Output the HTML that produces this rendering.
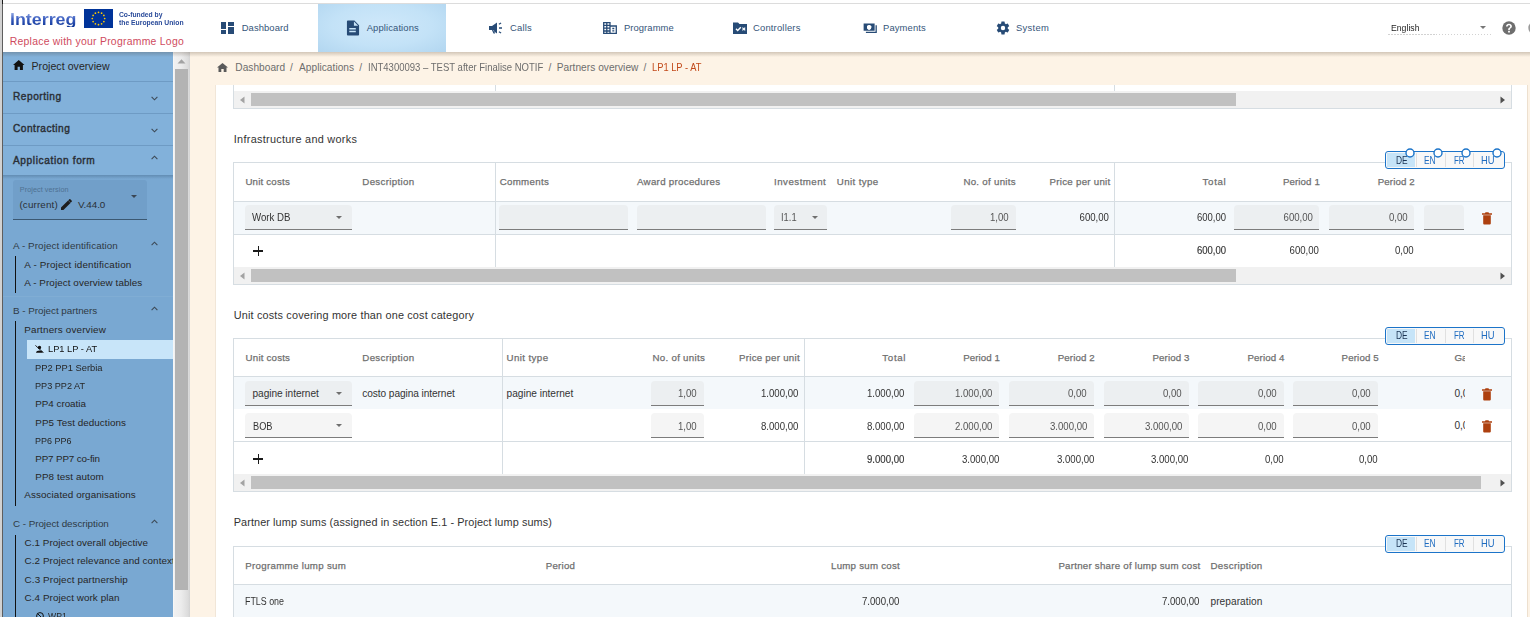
<!DOCTYPE html><html><head><meta charset="utf-8"><style>
*{margin:0;padding:0;box-sizing:border-box}
html,body{width:1530px;height:617px;overflow:hidden;background:#fff;font-family:'Liberation Sans', sans-serif;position:relative}
.t{position:absolute;white-space:nowrap}
svg{display:block}
</style></head><body>
<div style="position:absolute;left:0px;top:0px;width:1530px;height:617px;background:#fff;"></div>
<div style="position:absolute;left:173px;top:52px;width:1357px;height:565px;background:#fdf3e6;"></div>
<div style="position:absolute;left:215px;top:85px;width:1313px;height:532px;background:#fff;border-left:1px solid #f1e6d8;border-right:1px solid #ede0cf;"></div>
<div style="position:absolute;left:0px;top:3px;width:1530px;height:1px;background:#dcdcdc;"></div>
<div style="position:absolute;left:3px;top:4px;width:1527px;height:48px;background:#fff;"></div>
<div style="position:absolute;left:318px;top:4px;width:128px;height:48px;background:radial-gradient(ellipse at 50% 45%, #cfe8fa 0%, #c3e2f7 55%, #b2d6f0 100%);"></div>
<div id="t0" class="t" style="left:9.5px;top:11.50px;font-size:15.65px;line-height:15.65px;font-weight:700;color:#1b3f9e;transform:scaleX(1.1407);transform-origin:left center;background:linear-gradient(#9fb4ea 0%,#3d5fc0 45%,#0b3496 100%);-webkit-background-clip:text;background-clip:text;color:transparent;">Interreg</div>
<div style="position:absolute;left:84px;top:9px;width:29px;height:19px;background:#003399;"></div>
<svg style="position:absolute;left:84px;top:9px;" width="29" height="19" viewBox="0 0 29 19"><circle cx="20.70" cy="9.50" r="0.85" fill="#ffcc00"/><circle cx="19.87" cy="12.60" r="0.85" fill="#ffcc00"/><circle cx="17.60" cy="14.87" r="0.85" fill="#ffcc00"/><circle cx="14.50" cy="15.70" r="0.85" fill="#ffcc00"/><circle cx="11.40" cy="14.87" r="0.85" fill="#ffcc00"/><circle cx="9.13" cy="12.60" r="0.85" fill="#ffcc00"/><circle cx="8.30" cy="9.50" r="0.85" fill="#ffcc00"/><circle cx="9.13" cy="6.40" r="0.85" fill="#ffcc00"/><circle cx="11.40" cy="4.13" r="0.85" fill="#ffcc00"/><circle cx="14.50" cy="3.30" r="0.85" fill="#ffcc00"/><circle cx="17.60" cy="4.13" r="0.85" fill="#ffcc00"/><circle cx="19.87" cy="6.40" r="0.85" fill="#ffcc00"/></svg>
<div id="t1" class="t" style="left:118.6px;top:11.24px;font-size:7.25px;line-height:7.25px;font-weight:700;color:#2a4b9a;transform:scaleX(0.9298);transform-origin:left center;">Co-funded by</div>
<div id="t2" class="t" style="left:118.6px;top:19.24px;font-size:7.25px;line-height:7.25px;font-weight:700;color:#2a4b9a;transform:scaleX(0.9371);transform-origin:left center;">the European Union</div>
<div id="t3" class="t" style="left:9.7px;top:37.33px;font-size:10.43px;line-height:10.43px;font-weight:400;color:#cf4b5e;letter-spacing:0.251px;">Replace with your Programme Logo</div>
<svg style="position:absolute;left:221px;top:22px;" width="13" height="12" viewBox="0 0 13 12"><rect x="0" y="0" width="5" height="7" fill="#274b76"/><rect x="0" y="8" width="5" height="4" fill="#274b76"/><rect x="7" y="0" width="6" height="4" fill="#274b76"/><rect x="7" y="5" width="6" height="7" fill="#274b76"/></svg>
<svg style="position:absolute;left:346px;top:20px;" width="14" height="16" viewBox="0 0 15 16"><path fill="#274b76" d="M2 0h7l5 5v10a1 1 0 0 1-1 1H2a1 1 0 0 1-1-1V1a1 1 0 0 1 1-1zM8.5 1v4.5H13zM3.5 8v1.6h7V8zM3.5 11v1.6h7V11z" fill-rule="evenodd"/></svg>
<svg style="position:absolute;left:489px;top:22px;" width="15" height="12" viewBox="0 0 15 12"><path fill="#274b76" d="M0 4h3l5-3.5v11L3 8v0H0zM3 8.2l1.5 3.3h1.6L5 8.5zM10 5.3h3v1.4h-3zM9.6 1.8l2.2-1.3.6 1-2.2 1.3zM9.6 10.2l.6-1 2.2 1.3-.6 1z"/></svg>
<svg style="position:absolute;left:603px;top:22px;" width="14" height="12" viewBox="0 0 14 12"><path fill="none" stroke="#274b76" stroke-width="1.3" d="M.7.7h6.3v10.6H.7zM7 4h6.3v7.3H7zM.7 3.4h6.3M.7 6.2h6.3M.7 9h6.3M3.8.7v10.6M9.3 6.5h2M9.3 8.8h2"/></svg>
<svg style="position:absolute;left:733px;top:21px;" width="14" height="13" viewBox="0 0 14 13"><path fill="#274b76" d="M0 1.5h5l1.5 1.5H14v10H0zM2.5 8.2l1-1 1.2 1.2 2.6-2.6 1 1-3.6 3.6zM9 7l.8-.8 1 1 1-1 .8.8-1 1 1 1-.8.8-1-1-1 1L9 9l1-1z" fill-rule="evenodd"/></svg>
<svg style="position:absolute;left:862.5px;top:22.5px;" width="15" height="11" viewBox="0 0 15 12"><path fill="#274b76" d="M0 .5h12v8H0zM6 2.3l2.3 1v1.6C8.3 6.2 7.3 7 6 7.4 4.7 7 3.7 6.2 3.7 4.9V3.3z M13 2.5h1.4v8.5H2.5V9.6H13z" fill-rule="evenodd"/><path fill="#fff" d="M6 2.3l2.3 1v1.6C8.3 6.2 7.3 7 6 7.4 4.7 7 3.7 6.2 3.7 4.9V3.3z"/></svg>
<svg style="position:absolute;left:995px;top:20px;" width="16" height="16" viewBox="0 0 24 24"><path fill="#274b76" d="M19.14 12.94c.04-.3.06-.61.06-.94 0-.32-.02-.64-.07-.94l2.03-1.58a.49.49 0 0 0 .12-.61l-1.92-3.32a.49.49 0 0 0-.59-.22l-2.39.96c-.5-.38-1.03-.7-1.62-.94l-.36-2.54a.48.48 0 0 0-.48-.41h-3.84c-.24 0-.43.17-.47.41l-.36 2.54c-.59.24-1.13.57-1.62.94l-2.39-.96a.49.49 0 0 0-.59.22L2.74 8.87c-.12.21-.08.47.12.61l2.03 1.58c-.05.3-.09.63-.09.94s.02.64.07.94l-2.03 1.58a.49.49 0 0 0-.12.61l1.92 3.32c.12.22.37.29.59.22l2.39-.96c.5.38 1.03.7 1.62.94l.36 2.54c.05.24.24.41.48.41h3.84c.24 0 .44-.17.47-.41l.36-2.54c.59-.24 1.13-.56 1.62-.94l2.39.96c.22.08.47 0 .59-.22l1.92-3.32c.12-.22.07-.47-.12-.61zM12 15.3a3.3 3.3 0 1 1 0-6.6 3.3 3.3 0 0 1 0 6.6z"/></svg>
<div id="t4" class="t" style="left:241.7px;top:22.69px;font-size:9.42px;line-height:9.42px;font-weight:400;color:#35557a;letter-spacing:0.090px;">Dashboard</div>
<div id="t5" class="t" style="left:366.7px;top:22.69px;font-size:9.42px;line-height:9.42px;font-weight:400;color:#35557a;letter-spacing:0.120px;">Applications</div>
<div id="t6" class="t" style="left:510px;top:22.69px;font-size:9.42px;line-height:9.42px;font-weight:400;color:#35557a;letter-spacing:0.208px;">Calls</div>
<div id="t7" class="t" style="left:623.9px;top:22.69px;font-size:9.42px;line-height:9.42px;font-weight:400;color:#35557a;letter-spacing:0.089px;">Programme</div>
<div id="t8" class="t" style="left:753px;top:22.69px;font-size:9.42px;line-height:9.42px;font-weight:400;color:#35557a;letter-spacing:0.187px;">Controllers</div>
<div id="t9" class="t" style="left:883px;top:22.69px;font-size:9.42px;line-height:9.42px;font-weight:400;color:#35557a;letter-spacing:0.132px;">Payments</div>
<div id="t10" class="t" style="left:1016px;top:22.69px;font-size:9.42px;line-height:9.42px;font-weight:400;color:#35557a;letter-spacing:0.276px;">System</div>
<div id="t11" class="t" style="left:1390.6px;top:22.82px;font-size:9.86px;line-height:9.86px;font-weight:400;color:#1e1e1e;transform:scaleX(0.8823);transform-origin:left center;">English</div>
<div style="position:absolute;left:1388px;top:34px;width:103px;height:1px;background:repeating-linear-gradient(90deg,#d2d2d2 0 1.5px,transparent 1.5px 3px);"></div>
<svg style="position:absolute;left:1480px;top:26px;" width="6" height="3" viewBox="0 0 6 3"><path d="M0 0h6L3 3z" fill="#777"/></svg>
<svg style="position:absolute;left:1502px;top:21px;" width="14" height="14" viewBox="0 0 14 14"><circle cx="7" cy="7" r="6.7" fill="#6e6e6e"/><path fill="#fff" d="M6.2 9.2h1.6v-.5c0-.7.4-1 .9-1.4.6-.5 1.2-1 1.2-2.1C9.9 3.7 8.6 2.8 7 2.8S4.1 3.8 4 5.4h1.7c.1-.7.6-1.1 1.3-1.1.7 0 1.2.4 1.2 1.1 0 .5-.3.8-.8 1.2-.7.5-1.2 1-1.2 2zM6.1 10h1.8v1.6H6.1z"/></svg>
<svg style="position:absolute;left:1528px;top:21px;" width="14" height="14" viewBox="0 0 14 14"><circle cx="7" cy="7" r="6.7" fill="#9a9a9a"/></svg>
<svg style="position:absolute;left:217px;top:62.8px;" width="11" height="9" viewBox="0 0 11 9"><path fill="#5a5a5a" d="M5.5 0L0 4.6h1.5V9h2.8V6.1h2.4V9h2.8V4.6H11z"/></svg>
<div id="t12" class="t" style="left:235.3px;top:63.18px;font-size:10.14px;line-height:10.14px;font-weight:400;color:#6d6d6d;letter-spacing:0.033px;">Dashboard</div>
<div id="t13" class="t" style="left:290px;top:63.18px;font-size:10.14px;line-height:10.14px;font-weight:400;color:#6d6d6d;">/</div>
<div id="t14" class="t" style="left:299px;top:63.18px;font-size:10.14px;line-height:10.14px;font-weight:400;color:#6d6d6d;letter-spacing:0.046px;">Applications</div>
<div id="t15" class="t" style="left:359.3px;top:63.18px;font-size:10.14px;line-height:10.14px;font-weight:400;color:#6d6d6d;">/</div>
<div id="t16" class="t" style="left:367.8px;top:63.18px;font-size:10.14px;line-height:10.14px;font-weight:400;color:#6d6d6d;transform:scaleX(0.9400);transform-origin:left center;">INT4300093 – TEST after Finalise NOTIF</div>
<div id="t17" class="t" style="left:548.5px;top:63.18px;font-size:10.14px;line-height:10.14px;font-weight:400;color:#6d6d6d;">/</div>
<div id="t18" class="t" style="left:556.7px;top:63.18px;font-size:10.14px;line-height:10.14px;font-weight:400;color:#6d6d6d;letter-spacing:0.042px;">Partners overview</div>
<div id="t19" class="t" style="left:643.6px;top:63.18px;font-size:10.14px;line-height:10.14px;font-weight:400;color:#6d6d6d;">/</div>
<div id="t20" class="t" style="left:652px;top:63.18px;font-size:10.14px;line-height:10.14px;font-weight:400;color:#c24a1b;transform:scaleX(0.9197);transform-origin:left center;">LP1 LP - AT</div>
<div style="position:absolute;left:233px;top:85px;width:1px;height:23px;background:#d6dde2;"></div>
<div style="position:absolute;left:1511px;top:85px;width:1px;height:23px;background:#d6dde2;"></div>
<div style="position:absolute;left:495px;top:85px;width:1px;height:6px;background:#d6dde2;"></div>
<div style="position:absolute;left:1114px;top:85px;width:1px;height:6px;background:#d6dde2;"></div>
<div style="position:absolute;left:234px;top:91px;width:1277px;height:17px;background:#f1f1f1;"></div>
<div style="position:absolute;left:251px;top:93px;width:985px;height:13px;background:#c1c1c1;"></div>
<svg style="position:absolute;left:239px;top:96px;" width="6" height="8" viewBox="0 0 6 8"><path d="M5.5 0.5V7.5L1 4z" fill="#a3a3a3"/></svg>
<svg style="position:absolute;left:1500px;top:96px;" width="6" height="8" viewBox="0 0 6 8"><path d="M0.5 0.5V7.5L5 4z" fill="#505050"/></svg>
<div style="position:absolute;left:233px;top:108px;width:1279px;height:1px;background:#d6dde2;"></div>
<div id="t21" class="t" style="left:233.8px;top:133.66px;font-size:10.87px;line-height:10.87px;font-weight:400;color:#333;letter-spacing:0.286px;">Infrastructure and works</div>
<div style="position:absolute;left:233px;top:162px;width:1279px;height:1px;background:#d6dde2;"></div>
<div style="position:absolute;left:233px;top:284px;width:1279px;height:1px;background:#d6dde2;"></div>
<div style="position:absolute;left:233px;top:162px;width:1px;height:123px;background:#d6dde2;"></div>
<div style="position:absolute;left:1511px;top:162px;width:1px;height:123px;background:#d6dde2;"></div>
<div style="position:absolute;left:234px;top:202px;width:1277px;height:32px;background:#f4f8fb;"></div>
<div style="position:absolute;left:234px;top:201px;width:1277px;height:1px;background:#d6dde2;"></div>
<div style="position:absolute;left:234px;top:234px;width:1277px;height:1px;background:#d6dde2;"></div>
<div style="position:absolute;left:495px;top:162px;width:1px;height:105px;background:#d6dde2;"></div>
<div style="position:absolute;left:1114px;top:162px;width:1px;height:105px;background:#d6dde2;"></div>
<div style="position:absolute;left:234px;top:267px;width:1277px;height:17px;background:#f1f1f1;"></div>
<div style="position:absolute;left:251px;top:269px;width:985px;height:13px;background:#c1c1c1;"></div>
<svg style="position:absolute;left:239px;top:272px;" width="6" height="8" viewBox="0 0 6 8"><path d="M5.5 0.5V7.5L1 4z" fill="#a3a3a3"/></svg>
<svg style="position:absolute;left:1500px;top:272px;" width="6" height="8" viewBox="0 0 6 8"><path d="M0.5 0.5V7.5L5 4z" fill="#505050"/></svg>
<div style="position:absolute;left:1385px;top:151px;width:120px;height:18px;background:#f8f8f8;border:1.6px solid #1c74c9;border-radius:3px;"></div>
<div style="position:absolute;left:1387px;top:153px;width:28px;height:14px;background:#c6e4f8;"></div>
<div style="position:absolute;left:1415.5px;top:153px;width:1px;height:14px;background:#e0e0e0;"></div>
<div style="position:absolute;left:1444.5px;top:153px;width:1px;height:14px;background:#e0e0e0;"></div>
<div style="position:absolute;left:1472.5px;top:153px;width:1px;height:14px;background:#e0e0e0;"></div>
<div id="t22" class="t" style="left:1395.6px;top:156.28px;font-size:10.14px;line-height:10.14px;font-weight:400;color:#1a3353;transform:scaleX(0.8291);transform-origin:left center;">DE</div>
<div id="t23" class="t" style="left:1424.4px;top:156.28px;font-size:10.14px;line-height:10.14px;font-weight:400;color:#1f6cc0;transform:scaleX(0.8291);transform-origin:left center;">EN</div>
<div id="t24" class="t" style="left:1453.7px;top:156.28px;font-size:10.14px;line-height:10.14px;font-weight:400;color:#1f6cc0;transform:scaleX(0.7881);transform-origin:left center;">FR</div>
<div id="t25" class="t" style="left:1481.1px;top:156.28px;font-size:10.14px;line-height:10.14px;font-weight:400;color:#1f6cc0;transform:scaleX(0.9266);transform-origin:left center;">HU</div>
<svg style="position:absolute;left:1404.6px;top:147.8px;" width="10" height="10" viewBox="0 0 10 10"><circle cx="5" cy="5" r="4" fill="#fff" stroke="#1c74c9" stroke-width="1.4"/></svg>
<svg style="position:absolute;left:1433.3px;top:147.8px;" width="10" height="10" viewBox="0 0 10 10"><circle cx="5" cy="5" r="4" fill="#fff" stroke="#1c74c9" stroke-width="1.4"/></svg>
<svg style="position:absolute;left:1461px;top:147.8px;" width="10" height="10" viewBox="0 0 10 10"><circle cx="5" cy="5" r="4" fill="#fff" stroke="#1c74c9" stroke-width="1.4"/></svg>
<svg style="position:absolute;left:1492px;top:147.8px;" width="10" height="10" viewBox="0 0 10 10"><circle cx="5" cy="5" r="4" fill="#fff" stroke="#1c74c9" stroke-width="1.4"/></svg>
<div id="t26" class="t" style="left:245.4px;top:177.05px;font-size:9.71px;line-height:9.71px;font-weight:400;color:#6f6f6f;letter-spacing:0.196px;-webkit-text-stroke:0.25px #6f6f6f;">Unit costs</div>
<div id="t27" class="t" style="left:362.3px;top:177.05px;font-size:9.71px;line-height:9.71px;font-weight:400;color:#6f6f6f;letter-spacing:0.333px;-webkit-text-stroke:0.25px #6f6f6f;">Description</div>
<div id="t28" class="t" style="left:499.7px;top:177.05px;font-size:9.71px;line-height:9.71px;font-weight:400;color:#6f6f6f;letter-spacing:0.308px;-webkit-text-stroke:0.25px #6f6f6f;">Comments</div>
<div id="t29" class="t" style="left:637px;top:177.05px;font-size:9.71px;line-height:9.71px;font-weight:400;color:#6f6f6f;letter-spacing:0.300px;-webkit-text-stroke:0.25px #6f6f6f;">Award procedures</div>
<div id="t30" class="t" style="left:774.1px;top:177.05px;font-size:9.71px;line-height:9.71px;font-weight:400;color:#6f6f6f;letter-spacing:0.468px;-webkit-text-stroke:0.25px #6f6f6f;">Investment</div>
<div id="t31" class="t" style="left:836.8px;top:177.05px;font-size:9.71px;line-height:9.71px;font-weight:400;color:#6f6f6f;letter-spacing:0.397px;-webkit-text-stroke:0.25px #6f6f6f;">Unit type</div>
<div id="t32" class="t" style="left:963.4px;top:177.05px;font-size:9.71px;line-height:9.71px;font-weight:400;color:#6f6f6f;letter-spacing:0.289px;-webkit-text-stroke:0.25px #6f6f6f;">No. of units</div>
<div id="t33" class="t" style="left:1049.6px;top:177.05px;font-size:9.71px;line-height:9.71px;font-weight:400;color:#6f6f6f;letter-spacing:0.262px;-webkit-text-stroke:0.25px #6f6f6f;">Price per unit</div>
<div id="t34" class="t" style="left:1202.6px;top:177.05px;font-size:9.71px;line-height:9.71px;font-weight:400;color:#6f6f6f;letter-spacing:0.669px;-webkit-text-stroke:0.25px #6f6f6f;">Total</div>
<div id="t35" class="t" style="left:1283px;top:177.05px;font-size:9.71px;line-height:9.71px;font-weight:400;color:#6f6f6f;letter-spacing:0.091px;-webkit-text-stroke:0.25px #6f6f6f;">Period 1</div>
<div id="t36" class="t" style="left:1377.7px;top:177.05px;font-size:9.71px;line-height:9.71px;font-weight:400;color:#6f6f6f;letter-spacing:0.134px;-webkit-text-stroke:0.25px #6f6f6f;">Period 2</div>
<div style="position:absolute;left:245px;top:205px;width:107px;height:24px;background:#eceff1;border-radius:4px 4px 0 0;"></div>
<div style="position:absolute;left:245px;top:229px;width:107px;height:1.2px;background:#7c7c7c;"></div>
<div id="t37" class="t" style="left:252.3px;top:213.48px;font-size:10.14px;line-height:10.14px;font-weight:400;color:#333;transform:scaleX(0.9540);transform-origin:left center;">Work DB</div>
<svg style="position:absolute;left:336px;top:216px;" width="6" height="3" viewBox="0 0 6 3"><path d="M0 0h6L3 3z" fill="#6f6f6f"/></svg>
<div style="position:absolute;left:499px;top:205px;width:129px;height:24px;background:#eceff1;border-radius:4px 4px 0 0;"></div>
<div style="position:absolute;left:499px;top:229px;width:129px;height:1.2px;background:#7c7c7c;"></div>
<div style="position:absolute;left:637px;top:205px;width:129px;height:24px;background:#eceff1;border-radius:4px 4px 0 0;"></div>
<div style="position:absolute;left:637px;top:229px;width:129px;height:1.2px;background:#7c7c7c;"></div>
<div style="position:absolute;left:774px;top:205px;width:53px;height:24px;background:#eceff1;border-radius:4px 4px 0 0;"></div>
<div style="position:absolute;left:774px;top:229px;width:53px;height:1.2px;background:#7c7c7c;"></div>
<div id="t38" class="t" style="left:781px;top:213.48px;font-size:10.14px;line-height:10.14px;font-weight:400;color:#555;transform:scaleX(0.9267);transform-origin:left center;">I1.1</div>
<svg style="position:absolute;left:812px;top:216px;" width="6" height="3" viewBox="0 0 6 3"><path d="M0 0h6L3 3z" fill="#6f6f6f"/></svg>
<div style="position:absolute;left:951px;top:205px;width:65px;height:24px;background:#eceff1;border-radius:4px 4px 0 0;"></div>
<div style="position:absolute;left:951px;top:229px;width:65px;height:1.2px;background:#7c7c7c;"></div>
<div id="t39" class="t" style="right:521.5px;top:213.48px;font-size:10.14px;line-height:10.14px;font-weight:400;color:#555;transform:scaleX(0.9500);transform-origin:right center;">1,00</div>
<div id="t40" class="t" style="right:420.5999999999999px;top:213.48px;font-size:10.14px;line-height:10.14px;font-weight:400;color:#333;transform:scaleX(0.9500);transform-origin:right center;">600,00</div>
<div id="t41" class="t" style="left:1196.5px;top:213.48px;font-size:10.14px;line-height:10.14px;font-weight:400;color:#333;transform:scaleX(0.9384);transform-origin:left center;">600,00</div>
<div style="position:absolute;left:1234px;top:205px;width:85px;height:24px;background:#eceff1;border-radius:4px 4px 0 0;"></div>
<div style="position:absolute;left:1234px;top:229px;width:85px;height:1.2px;background:#7c7c7c;"></div>
<div id="t42" class="t" style="right:217.4000000000001px;top:213.48px;font-size:10.14px;line-height:10.14px;font-weight:400;color:#555;transform:scaleX(0.9500);transform-origin:right center;">600,00</div>
<div style="position:absolute;left:1329px;top:205px;width:85px;height:24px;background:#eceff1;border-radius:4px 4px 0 0;"></div>
<div style="position:absolute;left:1329px;top:229px;width:85px;height:1.2px;background:#7c7c7c;"></div>
<div id="t43" class="t" style="right:122.5px;top:213.48px;font-size:10.14px;line-height:10.14px;font-weight:400;color:#555;transform:scaleX(0.9500);transform-origin:right center;">0,00</div>
<div style="position:absolute;left:1424px;top:205px;width:40px;height:24px;background:#eceff1;border-radius:4px 4px 0 0;"></div>
<div style="position:absolute;left:1424px;top:229px;width:40px;height:1.2px;background:#7c7c7c;"></div>
<svg style="position:absolute;left:1482px;top:212px;" width="10" height="12.5" viewBox="0 0 10 12.5"><path fill="#ad400f" d="M1.2 3.3h7.6v8.3c0 .5-.4.9-.9.9H2.1c-.5 0-.9-.4-.9-.9zM0 1.3h3L3.5.3h3L7 1.3h3v1.4H0z"/></svg>
<div style="position:absolute;left:253.2px;top:250.4px;width:10px;height:1.3px;background:#1a1a1a;"></div>
<div style="position:absolute;left:257.59999999999997px;top:246px;width:1.3px;height:10px;background:#1a1a1a;"></div>
<div id="t44" class="t" style="left:1196.5px;top:246.38px;font-size:10.14px;line-height:10.14px;font-weight:400;color:#333;transform:scaleX(0.9384);transform-origin:left center;-webkit-text-stroke:0.15px #333;">600,00</div>
<div id="t45" class="t" style="right:211px;top:246.38px;font-size:10.14px;line-height:10.14px;font-weight:400;color:#333;transform:scaleX(0.9500);transform-origin:right center;">600,00</div>
<div id="t46" class="t" style="right:116px;top:246.38px;font-size:10.14px;line-height:10.14px;font-weight:400;color:#333;transform:scaleX(0.9500);transform-origin:right center;">0,00</div>
<div id="t47" class="t" style="left:233.8px;top:309.96px;font-size:10.87px;line-height:10.87px;font-weight:400;color:#333;letter-spacing:0.167px;">Unit costs covering more than one cost category</div>
<div style="position:absolute;left:233px;top:338px;width:1279px;height:1px;background:#d6dde2;"></div>
<div style="position:absolute;left:233px;top:491px;width:1279px;height:1px;background:#d6dde2;"></div>
<div style="position:absolute;left:233px;top:338px;width:1px;height:154px;background:#d6dde2;"></div>
<div style="position:absolute;left:1511px;top:338px;width:1px;height:154px;background:#d6dde2;"></div>
<div style="position:absolute;left:234px;top:377px;width:1277px;height:32px;background:#f4f8fb;"></div>
<div style="position:absolute;left:234px;top:376px;width:1277px;height:1px;background:#d6dde2;"></div>
<div style="position:absolute;left:234px;top:441px;width:1277px;height:1px;background:#d6dde2;"></div>
<div style="position:absolute;left:502px;top:338px;width:1px;height:136px;background:#d6dde2;"></div>
<div style="position:absolute;left:804px;top:338px;width:1px;height:136px;background:#d6dde2;"></div>
<div style="position:absolute;left:234px;top:474px;width:1277px;height:17px;background:#f1f1f1;"></div>
<div style="position:absolute;left:251px;top:476px;width:1230px;height:13px;background:#c1c1c1;"></div>
<svg style="position:absolute;left:239px;top:479px;" width="6" height="8" viewBox="0 0 6 8"><path d="M5.5 0.5V7.5L1 4z" fill="#a3a3a3"/></svg>
<svg style="position:absolute;left:1500px;top:479px;" width="6" height="8" viewBox="0 0 6 8"><path d="M0.5 0.5V7.5L5 4z" fill="#505050"/></svg>
<div style="position:absolute;left:1385px;top:327px;width:120px;height:18px;background:#f8f8f8;border:1.6px solid #1c74c9;border-radius:3px;"></div>
<div style="position:absolute;left:1387px;top:329px;width:28px;height:14px;background:#c6e4f8;"></div>
<div style="position:absolute;left:1415.5px;top:329px;width:1px;height:14px;background:#e0e0e0;"></div>
<div style="position:absolute;left:1444.5px;top:329px;width:1px;height:14px;background:#e0e0e0;"></div>
<div style="position:absolute;left:1472.5px;top:329px;width:1px;height:14px;background:#e0e0e0;"></div>
<div id="t48" class="t" style="left:1395.6px;top:331.28px;font-size:10.14px;line-height:10.14px;font-weight:400;color:#1a3353;transform:scaleX(0.8291);transform-origin:left center;">DE</div>
<div id="t49" class="t" style="left:1424.4px;top:331.28px;font-size:10.14px;line-height:10.14px;font-weight:400;color:#1f6cc0;transform:scaleX(0.8291);transform-origin:left center;">EN</div>
<div id="t50" class="t" style="left:1453.7px;top:331.28px;font-size:10.14px;line-height:10.14px;font-weight:400;color:#1f6cc0;transform:scaleX(0.7881);transform-origin:left center;">FR</div>
<div id="t51" class="t" style="left:1481.1px;top:331.28px;font-size:10.14px;line-height:10.14px;font-weight:400;color:#1f6cc0;transform:scaleX(0.9266);transform-origin:left center;">HU</div>
<div id="t52" class="t" style="left:245.6px;top:353.45px;font-size:9.71px;line-height:9.71px;font-weight:400;color:#6f6f6f;letter-spacing:0.196px;-webkit-text-stroke:0.25px #6f6f6f;">Unit costs</div>
<div id="t53" class="t" style="left:362.3px;top:353.45px;font-size:9.71px;line-height:9.71px;font-weight:400;color:#6f6f6f;letter-spacing:0.333px;-webkit-text-stroke:0.25px #6f6f6f;">Description</div>
<div id="t54" class="t" style="left:506.6px;top:353.45px;font-size:9.71px;line-height:9.71px;font-weight:400;color:#6f6f6f;letter-spacing:0.397px;-webkit-text-stroke:0.25px #6f6f6f;">Unit type</div>
<div id="t55" class="t" style="left:652.5px;top:353.45px;font-size:9.71px;line-height:9.71px;font-weight:400;color:#6f6f6f;letter-spacing:0.289px;-webkit-text-stroke:0.25px #6f6f6f;">No. of units</div>
<div id="t56" class="t" style="left:739px;top:353.45px;font-size:9.71px;line-height:9.71px;font-weight:400;color:#6f6f6f;letter-spacing:0.262px;-webkit-text-stroke:0.25px #6f6f6f;">Price per unit</div>
<div id="t57" class="t" style="left:882.3px;top:353.45px;font-size:9.71px;line-height:9.71px;font-weight:400;color:#6f6f6f;letter-spacing:0.669px;-webkit-text-stroke:0.25px #6f6f6f;">Total</div>
<div id="t58" class="t" style="left:963.2px;top:353.45px;font-size:9.71px;line-height:9.71px;font-weight:400;color:#6f6f6f;letter-spacing:0.091px;-webkit-text-stroke:0.25px #6f6f6f;">Period 1</div>
<div id="t59" class="t" style="left:1057.7px;top:353.45px;font-size:9.71px;line-height:9.71px;font-weight:400;color:#6f6f6f;letter-spacing:0.134px;-webkit-text-stroke:0.25px #6f6f6f;">Period 2</div>
<div id="t60" class="t" style="left:1152.4px;top:353.45px;font-size:9.71px;line-height:9.71px;font-weight:400;color:#6f6f6f;letter-spacing:0.134px;-webkit-text-stroke:0.25px #6f6f6f;">Period 3</div>
<div id="t61" class="t" style="left:1247.4px;top:353.45px;font-size:9.71px;line-height:9.71px;font-weight:400;color:#6f6f6f;letter-spacing:0.134px;-webkit-text-stroke:0.25px #6f6f6f;">Period 4</div>
<div id="t62" class="t" style="left:1341.6px;top:353.45px;font-size:9.71px;line-height:9.71px;font-weight:400;color:#6f6f6f;letter-spacing:0.134px;-webkit-text-stroke:0.25px #6f6f6f;">Period 5</div>
<div id="t63" class="t" style="left:1454.4px;top:353.45px;font-size:9.71px;line-height:9.71px;font-weight:400;color:#6f6f6f;-webkit-text-stroke:0.25px #6f6f6f;width:10.5px;overflow:hidden;">Ga</div>
<div style="position:absolute;left:245px;top:381px;width:106.5px;height:24px;background:#eceff1;border-radius:4px 4px 0 0;"></div>
<div style="position:absolute;left:245px;top:405px;width:106.5px;height:1.2px;background:#7c7c7c;"></div>
<div id="t64" class="t" style="left:252.5px;top:389.48px;font-size:10.14px;line-height:10.14px;font-weight:400;color:#333;letter-spacing:-0.049px;">pagine internet</div>
<svg style="position:absolute;left:336px;top:392px;" width="6" height="3" viewBox="0 0 6 3"><path d="M0 0h6L3 3z" fill="#6f6f6f"/></svg>
<div id="t65" class="t" style="left:362.3px;top:389.48px;font-size:10.14px;line-height:10.14px;font-weight:400;color:#333;letter-spacing:-0.075px;">costo pagina internet</div>
<div id="t66" class="t" style="left:506.6px;top:389.48px;font-size:10.14px;line-height:10.14px;font-weight:400;color:#333;letter-spacing:-0.021px;">pagine internet</div>
<div style="position:absolute;left:651px;top:381px;width:53px;height:24px;background:#eceff1;border-radius:4px 4px 0 0;"></div>
<div style="position:absolute;left:651px;top:405px;width:53px;height:1.2px;background:#7c7c7c;"></div>
<div id="t67" class="t" style="right:832.8px;top:389.48px;font-size:10.14px;line-height:10.14px;font-weight:400;color:#555;transform:scaleX(0.9500);transform-origin:right center;">1,00</div>
<div id="t68" class="t" style="right:731.2px;top:389.48px;font-size:10.14px;line-height:10.14px;font-weight:400;color:#333;transform:scaleX(0.9500);transform-origin:right center;">1.000,00</div>
<div id="t69" class="t" style="right:625.3px;top:389.48px;font-size:10.14px;line-height:10.14px;font-weight:400;color:#333;transform:scaleX(0.9500);transform-origin:right center;">1.000,00</div>
<div style="position:absolute;left:914px;top:381px;width:85px;height:24px;background:#eceff1;border-radius:4px 4px 0 0;"></div>
<div style="position:absolute;left:914px;top:405px;width:85px;height:1.2px;background:#7c7c7c;"></div>
<div id="t70" class="t" style="right:538px;top:389.48px;font-size:10.14px;line-height:10.14px;font-weight:400;color:#555;transform:scaleX(0.9500);transform-origin:right center;">1.000,00</div>
<div style="position:absolute;left:1009px;top:381px;width:85px;height:24px;background:#eceff1;border-radius:4px 4px 0 0;"></div>
<div style="position:absolute;left:1009px;top:405px;width:85px;height:1.2px;background:#7c7c7c;"></div>
<div id="t71" class="t" style="right:443px;top:389.48px;font-size:10.14px;line-height:10.14px;font-weight:400;color:#555;transform:scaleX(0.9500);transform-origin:right center;">0,00</div>
<div style="position:absolute;left:1104px;top:381px;width:85px;height:24px;background:#eceff1;border-radius:4px 4px 0 0;"></div>
<div style="position:absolute;left:1104px;top:405px;width:85px;height:1.2px;background:#7c7c7c;"></div>
<div id="t72" class="t" style="right:348px;top:389.48px;font-size:10.14px;line-height:10.14px;font-weight:400;color:#555;transform:scaleX(0.9500);transform-origin:right center;">0,00</div>
<div style="position:absolute;left:1198px;top:381px;width:86px;height:24px;background:#eceff1;border-radius:4px 4px 0 0;"></div>
<div style="position:absolute;left:1198px;top:405px;width:86px;height:1.2px;background:#7c7c7c;"></div>
<div id="t73" class="t" style="right:253px;top:389.48px;font-size:10.14px;line-height:10.14px;font-weight:400;color:#555;transform:scaleX(0.9500);transform-origin:right center;">0,00</div>
<div style="position:absolute;left:1293px;top:381px;width:85px;height:24px;background:#eceff1;border-radius:4px 4px 0 0;"></div>
<div style="position:absolute;left:1293px;top:405px;width:85px;height:1.2px;background:#7c7c7c;"></div>
<div id="t74" class="t" style="right:159px;top:389.48px;font-size:10.14px;line-height:10.14px;font-weight:400;color:#555;transform:scaleX(0.9500);transform-origin:right center;">0,00</div>
<div id="t75" class="t" style="left:1454.4px;top:388.58px;font-size:10.14px;line-height:10.14px;font-weight:400;color:#333;width:10.5px;overflow:hidden;">0,0</div>
<svg style="position:absolute;left:1482px;top:388px;" width="10" height="12.5" viewBox="0 0 10 12.5"><path fill="#ad400f" d="M1.2 3.3h7.6v8.3c0 .5-.4.9-.9.9H2.1c-.5 0-.9-.4-.9-.9zM0 1.3h3L3.5.3h3L7 1.3h3v1.4H0z"/></svg>
<div style="position:absolute;left:245px;top:413px;width:106.5px;height:24px;background:#f5f5f5;border-radius:4px 4px 0 0;"></div>
<div style="position:absolute;left:245px;top:437px;width:106.5px;height:1.2px;background:#7c7c7c;"></div>
<div id="t76" class="t" style="left:252.5px;top:421.58px;font-size:10.14px;line-height:10.14px;font-weight:400;color:#333;transform:scaleX(0.9087);transform-origin:left center;">BOB</div>
<svg style="position:absolute;left:336px;top:424px;" width="6" height="3" viewBox="0 0 6 3"><path d="M0 0h6L3 3z" fill="#6f6f6f"/></svg>
<div style="position:absolute;left:651px;top:413px;width:53px;height:24px;background:#f5f5f5;border-radius:4px 4px 0 0;"></div>
<div style="position:absolute;left:651px;top:437px;width:53px;height:1.2px;background:#7c7c7c;"></div>
<div id="t77" class="t" style="right:832.8px;top:421.58px;font-size:10.14px;line-height:10.14px;font-weight:400;color:#555;transform:scaleX(0.9500);transform-origin:right center;">1,00</div>
<div id="t78" class="t" style="right:731.2px;top:421.58px;font-size:10.14px;line-height:10.14px;font-weight:400;color:#333;transform:scaleX(0.9500);transform-origin:right center;">8.000,00</div>
<div id="t79" class="t" style="right:625.3px;top:421.58px;font-size:10.14px;line-height:10.14px;font-weight:400;color:#333;transform:scaleX(0.9500);transform-origin:right center;">8.000,00</div>
<div style="position:absolute;left:914px;top:413px;width:85px;height:24px;background:#f5f5f5;border-radius:4px 4px 0 0;"></div>
<div style="position:absolute;left:914px;top:437px;width:85px;height:1.2px;background:#7c7c7c;"></div>
<div id="t80" class="t" style="right:538px;top:421.58px;font-size:10.14px;line-height:10.14px;font-weight:400;color:#555;transform:scaleX(0.9500);transform-origin:right center;">2.000,00</div>
<div style="position:absolute;left:1009px;top:413px;width:85px;height:24px;background:#f5f5f5;border-radius:4px 4px 0 0;"></div>
<div style="position:absolute;left:1009px;top:437px;width:85px;height:1.2px;background:#7c7c7c;"></div>
<div id="t81" class="t" style="right:443px;top:421.58px;font-size:10.14px;line-height:10.14px;font-weight:400;color:#555;transform:scaleX(0.9500);transform-origin:right center;">3.000,00</div>
<div style="position:absolute;left:1104px;top:413px;width:85px;height:24px;background:#f5f5f5;border-radius:4px 4px 0 0;"></div>
<div style="position:absolute;left:1104px;top:437px;width:85px;height:1.2px;background:#7c7c7c;"></div>
<div id="t82" class="t" style="right:348px;top:421.58px;font-size:10.14px;line-height:10.14px;font-weight:400;color:#555;transform:scaleX(0.9500);transform-origin:right center;">3.000,00</div>
<div style="position:absolute;left:1198px;top:413px;width:86px;height:24px;background:#f5f5f5;border-radius:4px 4px 0 0;"></div>
<div style="position:absolute;left:1198px;top:437px;width:86px;height:1.2px;background:#7c7c7c;"></div>
<div id="t83" class="t" style="right:253px;top:421.58px;font-size:10.14px;line-height:10.14px;font-weight:400;color:#555;transform:scaleX(0.9500);transform-origin:right center;">0,00</div>
<div style="position:absolute;left:1293px;top:413px;width:85px;height:24px;background:#f5f5f5;border-radius:4px 4px 0 0;"></div>
<div style="position:absolute;left:1293px;top:437px;width:85px;height:1.2px;background:#7c7c7c;"></div>
<div id="t84" class="t" style="right:159px;top:421.58px;font-size:10.14px;line-height:10.14px;font-weight:400;color:#555;transform:scaleX(0.9500);transform-origin:right center;">0,00</div>
<div id="t85" class="t" style="left:1454.4px;top:420.68px;font-size:10.14px;line-height:10.14px;font-weight:400;color:#333;width:10.5px;overflow:hidden;">0,0</div>
<svg style="position:absolute;left:1482px;top:420px;" width="10" height="12.5" viewBox="0 0 10 12.5"><path fill="#ad400f" d="M1.2 3.3h7.6v8.3c0 .5-.4.9-.9.9H2.1c-.5 0-.9-.4-.9-.9zM0 1.3h3L3.5.3h3L7 1.3h3v1.4H0z"/></svg>
<div style="position:absolute;left:253.2px;top:458.4px;width:10px;height:1.3px;background:#1a1a1a;"></div>
<div style="position:absolute;left:257.59999999999997px;top:454px;width:1.3px;height:10px;background:#1a1a1a;"></div>
<div id="t86" class="t" style="right:625.3px;top:454.58px;font-size:10.14px;line-height:10.14px;font-weight:400;color:#333;transform:scaleX(0.9500);transform-origin:right center;-webkit-text-stroke:0.15px #333;">9.000,00</div>
<div id="t87" class="t" style="right:530.8px;top:454.58px;font-size:10.14px;line-height:10.14px;font-weight:400;color:#333;transform:scaleX(0.9500);transform-origin:right center;">3.000,00</div>
<div id="t88" class="t" style="right:436px;top:454.58px;font-size:10.14px;line-height:10.14px;font-weight:400;color:#333;transform:scaleX(0.9500);transform-origin:right center;">3.000,00</div>
<div id="t89" class="t" style="right:341.29999999999995px;top:454.58px;font-size:10.14px;line-height:10.14px;font-weight:400;color:#333;transform:scaleX(0.9500);transform-origin:right center;">3.000,00</div>
<div id="t90" class="t" style="right:246.29999999999995px;top:454.58px;font-size:10.14px;line-height:10.14px;font-weight:400;color:#333;transform:scaleX(0.9500);transform-origin:right center;">0,00</div>
<div id="t91" class="t" style="right:152.0999999999999px;top:454.58px;font-size:10.14px;line-height:10.14px;font-weight:400;color:#333;transform:scaleX(0.9500);transform-origin:right center;">0,00</div>
<div id="t92" class="t" style="left:233.7px;top:516.96px;font-size:10.87px;line-height:10.87px;font-weight:400;color:#333;letter-spacing:0.099px;">Partner lump sums (assigned in section E.1 - Project lump sums)</div>
<div style="position:absolute;left:233px;top:546px;width:1279px;height:1px;background:#d6dde2;"></div>
<div style="position:absolute;left:233px;top:700px;width:1279px;height:1px;background:#d6dde2;"></div>
<div style="position:absolute;left:233px;top:546px;width:1px;height:155px;background:#d6dde2;"></div>
<div style="position:absolute;left:1511px;top:546px;width:1px;height:155px;background:#d6dde2;"></div>
<div style="position:absolute;left:234px;top:585px;width:1277px;height:40px;background:#f4f8fb;"></div>
<div style="position:absolute;left:234px;top:584px;width:1277px;height:1px;background:#d6dde2;"></div>
<div style="position:absolute;left:1385px;top:535px;width:120px;height:18px;background:#f8f8f8;border:1.6px solid #1c74c9;border-radius:3px;"></div>
<div style="position:absolute;left:1387px;top:537px;width:28px;height:14px;background:#c6e4f8;"></div>
<div style="position:absolute;left:1415.5px;top:537px;width:1px;height:14px;background:#e0e0e0;"></div>
<div style="position:absolute;left:1444.5px;top:537px;width:1px;height:14px;background:#e0e0e0;"></div>
<div style="position:absolute;left:1472.5px;top:537px;width:1px;height:14px;background:#e0e0e0;"></div>
<div id="t93" class="t" style="left:1395.6px;top:539.28px;font-size:10.14px;line-height:10.14px;font-weight:400;color:#1a3353;transform:scaleX(0.8291);transform-origin:left center;">DE</div>
<div id="t94" class="t" style="left:1424.4px;top:539.28px;font-size:10.14px;line-height:10.14px;font-weight:400;color:#1f6cc0;transform:scaleX(0.8291);transform-origin:left center;">EN</div>
<div id="t95" class="t" style="left:1453.7px;top:539.28px;font-size:10.14px;line-height:10.14px;font-weight:400;color:#1f6cc0;transform:scaleX(0.7881);transform-origin:left center;">FR</div>
<div id="t96" class="t" style="left:1481.1px;top:539.28px;font-size:10.14px;line-height:10.14px;font-weight:400;color:#1f6cc0;transform:scaleX(0.9266);transform-origin:left center;">HU</div>
<div id="t97" class="t" style="left:245.3px;top:560.95px;font-size:9.71px;line-height:9.71px;font-weight:400;color:#6f6f6f;letter-spacing:0.301px;-webkit-text-stroke:0.25px #6f6f6f;">Programme lump sum</div>
<div id="t98" class="t" style="left:545.8px;top:560.95px;font-size:9.71px;line-height:9.71px;font-weight:400;color:#6f6f6f;letter-spacing:0.223px;-webkit-text-stroke:0.25px #6f6f6f;">Period</div>
<div id="t99" class="t" style="left:831px;top:560.95px;font-size:9.71px;line-height:9.71px;font-weight:400;color:#6f6f6f;letter-spacing:0.248px;-webkit-text-stroke:0.25px #6f6f6f;">Lump sum cost</div>
<div id="t100" class="t" style="left:1058.4px;top:560.95px;font-size:9.71px;line-height:9.71px;font-weight:400;color:#6f6f6f;letter-spacing:0.243px;-webkit-text-stroke:0.25px #6f6f6f;">Partner share of lump sum cost</div>
<div id="t101" class="t" style="left:1210.5px;top:560.95px;font-size:9.71px;line-height:9.71px;font-weight:400;color:#6f6f6f;letter-spacing:0.323px;-webkit-text-stroke:0.25px #6f6f6f;">Description</div>
<div id="t102" class="t" style="left:245.3px;top:597.08px;font-size:10.14px;line-height:10.14px;font-weight:400;color:#333;transform:scaleX(0.8773);transform-origin:left center;">FTLS one</div>
<div id="t103" class="t" style="right:631px;top:597.08px;font-size:10.14px;line-height:10.14px;font-weight:400;color:#333;transform:scaleX(0.9500);transform-origin:right center;">7.000,00</div>
<div id="t104" class="t" style="right:330.5px;top:597.08px;font-size:10.14px;line-height:10.14px;font-weight:400;color:#333;transform:scaleX(0.9500);transform-origin:right center;">7.000,00</div>
<div id="t105" class="t" style="left:1210.5px;top:597.08px;font-size:10.14px;line-height:10.14px;font-weight:400;color:#333;letter-spacing:0.058px;">preparation</div>
<div style="position:absolute;left:3px;top:52px;width:170px;height:565px;background:#79a8d2;"></div>
<div style="position:absolute;left:3px;top:52px;width:170px;height:123px;background:#82b1da;"></div>
<div style="position:absolute;left:3px;top:81px;width:170px;height:1px;background:#6e9bc4;"></div>
<div style="position:absolute;left:3px;top:113px;width:170px;height:1px;background:#6e9bc4;"></div>
<div style="position:absolute;left:3px;top:145px;width:170px;height:1px;background:#6e9bc4;"></div>
<div style="position:absolute;left:3px;top:175px;width:170px;height:4px;background:linear-gradient(rgba(40,70,100,0.28),rgba(40,70,100,0));"></div>
<svg style="position:absolute;left:13px;top:60px;" width="11.5" height="10" viewBox="0 0 11.5 10"><path fill="#111" d="M5.75 0L0 5h1.6v5h3V6.8h2.3V10h3V5h1.6z"/></svg>
<div id="t106" class="t" style="left:31.5px;top:61.21px;font-size:10.58px;line-height:10.58px;font-weight:400;color:#262626;letter-spacing:0.036px;">Project overview</div>
<div id="t107" class="t" style="left:13px;top:91.98px;font-size:10.14px;line-height:10.14px;font-weight:400;color:#2a2f36;letter-spacing:0.526px;-webkit-text-stroke:0.4px #2a2f36;">Reporting</div>
<svg style="position:absolute;left:151px;top:95.5px;" width="7" height="5" viewBox="0 0 7 5"><path d="M0.6 0.8L3.5 3.8L6.4 0.8" fill="none" stroke="#3d4a57" stroke-width="1.1"/></svg>
<div id="t108" class="t" style="left:13px;top:123.98px;font-size:10.14px;line-height:10.14px;font-weight:400;color:#2a2f36;letter-spacing:0.503px;-webkit-text-stroke:0.4px #2a2f36;">Contracting</div>
<svg style="position:absolute;left:151px;top:128px;" width="7" height="5" viewBox="0 0 7 5"><path d="M0.6 0.8L3.5 3.8L6.4 0.8" fill="none" stroke="#3d4a57" stroke-width="1.1"/></svg>
<div id="t109" class="t" style="left:13px;top:155.98px;font-size:10.14px;line-height:10.14px;font-weight:400;color:#2a2f36;letter-spacing:0.613px;-webkit-text-stroke:0.4px #2a2f36;">Application form</div>
<svg style="position:absolute;left:151px;top:154.8px;" width="7" height="5" viewBox="0 0 7 5"><path d="M0.6 4.2L3.5 1.2L6.4 4.2" fill="none" stroke="#3d4a57" stroke-width="1.1"/></svg>
<div style="position:absolute;left:13px;top:180px;width:134px;height:39px;background:#719fc9;border-radius:3px 3px 0 0;"></div>
<div style="position:absolute;left:13px;top:219px;width:134px;height:1px;background:#3b5872;"></div>
<div id="t110" class="t" style="left:19.8px;top:186.44px;font-size:7.25px;line-height:7.25px;font-weight:400;color:#4f7192;letter-spacing:0.059px;">Project version</div>
<div id="t111" class="t" style="left:19.4px;top:199.92px;font-size:9.86px;line-height:9.86px;font-weight:400;color:#2a2f36;letter-spacing:0.148px;">(current)</div>
<svg style="position:absolute;left:60.8px;top:198.8px;" width="11" height="11" viewBox="0 0 11 11"><path fill="#1e1e1e" d="M0 8.6V11h2.4l7.1-7.1-2.4-2.4zM10.8 2.6a.6.6 0 0 0 0-.9L9.3.2a.6.6 0 0 0-.9 0L7.3 1.3l2.4 2.4z"/></svg>
<div id="t112" class="t" style="left:78px;top:199.92px;font-size:9.86px;line-height:9.86px;font-weight:400;color:#2a2f36;letter-spacing:-0.055px;">V.44.0</div>
<svg style="position:absolute;left:131px;top:195px;" width="6" height="3" viewBox="0 0 6 3"><path d="M0 0h6L3 3z" fill="#3a4654"/></svg>
<div id="t113" class="t" style="left:13px;top:240.62px;font-size:9.86px;line-height:9.86px;font-weight:400;color:#2f3a44;letter-spacing:0.077px;">A - Project identification</div>
<svg style="position:absolute;left:151px;top:241px;" width="7" height="5" viewBox="0 0 7 5"><path d="M0.6 4.2L3.5 1.2L6.4 4.2" fill="none" stroke="#3d4a57" stroke-width="1.1"/></svg>
<div style="position:absolute;left:15px;top:256px;width:1px;height:37px;background:#111;"></div>
<div id="t114" class="t" style="left:24.3px;top:259.62px;font-size:9.86px;line-height:9.86px;font-weight:400;color:#262626;letter-spacing:0.165px;">A - Project identification</div>
<div id="t115" class="t" style="left:24.3px;top:278.32px;font-size:9.86px;line-height:9.86px;font-weight:400;color:#262626;letter-spacing:0.076px;">A - Project overview tables</div>
<div style="position:absolute;left:3px;top:296px;width:170px;height:1px;background:rgba(255,255,255,0.06);"></div>
<div id="t116" class="t" style="left:13px;top:305.62px;font-size:9.86px;line-height:9.86px;font-weight:400;color:#2f3a44;letter-spacing:-0.032px;">B - Project partners</div>
<svg style="position:absolute;left:151px;top:306px;" width="7" height="5" viewBox="0 0 7 5"><path d="M0.6 4.2L3.5 1.2L6.4 4.2" fill="none" stroke="#3d4a57" stroke-width="1.1"/></svg>
<div style="position:absolute;left:15px;top:321px;width:1px;height:185px;background:#111;"></div>
<div id="t117" class="t" style="left:24.3px;top:325.42px;font-size:9.86px;line-height:9.86px;font-weight:400;color:#262626;letter-spacing:0.169px;">Partners overview</div>
<div style="position:absolute;left:27px;top:340px;width:146px;height:19px;background:#c8e5f9;"></div>
<svg style="position:absolute;left:35px;top:345px;" width="9" height="8" viewBox="0 0 9 8"><path fill="#111" d="M4.5 0.8a1.7 1.7 0 1 1 0 3.4 1.7 1.7 0 0 1 0-3.4zM1 7.8c0-1.4 2-2.3 3.5-2.3 1 0 2 .3 2.7.8L7.8 7.8z"/><path d="M0.4 0.4L8.6 7.8" stroke="#111" stroke-width="0.9"/></svg>
<div id="t118" class="t" style="left:47.8px;top:343.52px;font-size:9.86px;line-height:9.86px;font-weight:400;color:#111;transform:scaleX(0.9419);transform-origin:left center;">LP1 LP - AT</div>
<div id="t119" class="t" style="left:35.3px;top:362.62px;font-size:9.86px;line-height:9.86px;font-weight:400;color:#262626;transform:scaleX(0.9481);transform-origin:left center;">PP2 PP1 Serbia</div>
<div id="t120" class="t" style="left:35.3px;top:380.52px;font-size:9.86px;line-height:9.86px;font-weight:400;color:#262626;transform:scaleX(0.9265);transform-origin:left center;">PP3 PP2 AT</div>
<div id="t121" class="t" style="left:35.3px;top:399.12px;font-size:9.86px;line-height:9.86px;font-weight:400;color:#262626;letter-spacing:-0.030px;">PP4 croatia</div>
<div id="t122" class="t" style="left:35.3px;top:417.52px;font-size:9.86px;line-height:9.86px;font-weight:400;color:#262626;letter-spacing:0.056px;">PP5 Test deductions</div>
<div id="t123" class="t" style="left:35.3px;top:435.62px;font-size:9.86px;line-height:9.86px;font-weight:400;color:#262626;transform:scaleX(0.9115);transform-origin:left center;">PP6 PP6</div>
<div id="t124" class="t" style="left:35.3px;top:454.32px;font-size:9.86px;line-height:9.86px;font-weight:400;color:#262626;letter-spacing:-0.160px;">PP7 PP7 co-fin</div>
<div id="t125" class="t" style="left:35.3px;top:472.42px;font-size:9.86px;line-height:9.86px;font-weight:400;color:#262626;letter-spacing:0.083px;">PP8 test autom</div>
<div id="t126" class="t" style="left:24.3px;top:489.92px;font-size:9.86px;line-height:9.86px;font-weight:400;color:#262626;letter-spacing:0.089px;">Associated organisations</div>
<div id="t127" class="t" style="left:13px;top:518.72px;font-size:9.86px;line-height:9.86px;font-weight:400;color:#2f3a44;letter-spacing:-0.048px;">C - Project description</div>
<svg style="position:absolute;left:151px;top:519px;" width="7" height="5" viewBox="0 0 7 5"><path d="M0.6 4.2L3.5 1.2L6.4 4.2" fill="none" stroke="#3d4a57" stroke-width="1.1"/></svg>
<div style="position:absolute;left:15px;top:535px;width:1px;height:82px;background:#111;"></div>
<div id="t128" class="t" style="left:24.6px;top:538.12px;font-size:9.86px;line-height:9.86px;font-weight:400;color:#262626;letter-spacing:0.045px;">C.1 Project overall objective</div>
<div id="t129" class="t" style="left:24.6px;top:556.12px;font-size:9.86px;line-height:9.86px;font-weight:400;color:#262626;letter-spacing:0.076px;">C.2 Project relevance and context</div>
<div id="t130" class="t" style="left:24.6px;top:574.52px;font-size:9.86px;line-height:9.86px;font-weight:400;color:#262626;letter-spacing:0.114px;">C.3 Project partnership</div>
<div id="t131" class="t" style="left:24.6px;top:593.42px;font-size:9.86px;line-height:9.86px;font-weight:400;color:#262626;letter-spacing:0.066px;">C.4 Project work plan</div>
<svg style="position:absolute;left:36px;top:612px;" width="8" height="8" viewBox="0 0 8 8"><circle cx="4" cy="4" r="3.4" fill="none" stroke="#111" stroke-width="1"/><path d="M1.6 1.6L6.4 6.4" stroke="#111" stroke-width="1"/></svg>
<div id="t132" class="t" style="left:48px;top:611.12px;font-size:9.86px;line-height:9.86px;font-weight:400;color:#262626;transform:scaleX(0.8757);transform-origin:left center;">WP1</div>
<div style="position:absolute;left:173px;top:52px;width:17px;height:565px;background:linear-gradient(90deg,#fbfbfb 0,#f1f1f1 1px,#ececec 8px,#dcdcdc 15px,#d2d2d2 17px);"></div>
<svg style="position:absolute;left:177px;top:58px;" width="9" height="6" viewBox="0 0 9 6"><path d="M0.5 5.5L4.5 1.2L8.5 5.5z" fill="#a3a3a3"/></svg>
<div style="position:absolute;left:175px;top:69px;width:13px;height:521px;background:#b3b3b3;"></div>
<div style="position:absolute;left:3px;top:52px;width:1527px;height:5px;background:linear-gradient(rgba(60,40,20,0.22),rgba(60,40,20,0));"></div>
<div style="position:absolute;left:0px;top:0px;width:2px;height:617px;background:#d2d2d2;"></div>
<div style="position:absolute;left:2px;top:0px;width:1px;height:617px;background:#5e5e5e;"></div>
<div style="position:absolute;left:2px;top:0px;width:1px;height:4px;background:#1a1a1a;"></div>
</body></html>
